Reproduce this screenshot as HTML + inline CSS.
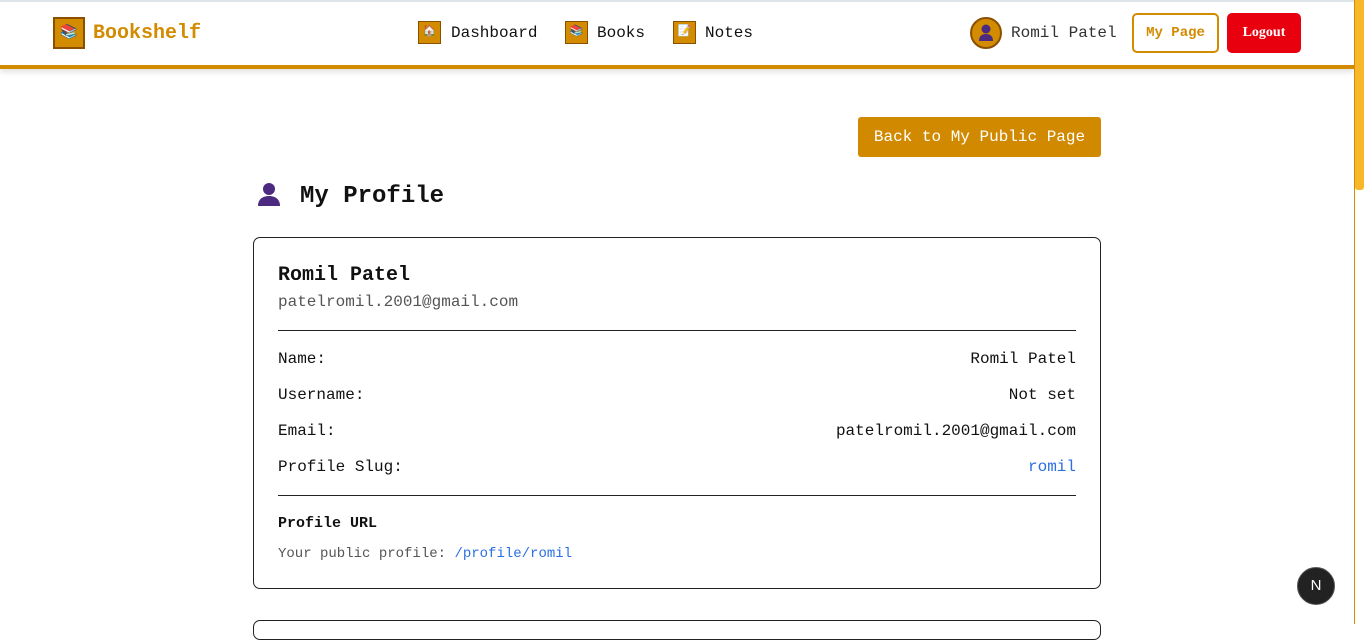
<!DOCTYPE html>
<html><head><meta charset="utf-8"><style>
*{box-sizing:border-box;margin:0;padding:0}
body{width:1365px;height:624px;overflow:hidden;background:#fff;font-family:"Liberation Mono","Courier New",monospace;color:#111;position:relative}
.hdr{position:absolute;left:0;top:0;width:1354px;height:69px;border-top:2px solid #dde5e8;border-bottom:4px solid #d38b00;background:#fff;box-shadow:0 3px 6px rgba(0,0,0,.12)}
.ib{position:absolute;width:23px;height:23px;background:#d38b00;border:1px solid #8a4f00;font-size:11px;line-height:21px;text-align:center}
.t{position:absolute;font-size:16px;white-space:nowrap;line-height:1}
.sb{position:absolute;right:0;top:0;width:11px;height:624px;background:#fff;border-left:1px solid #d38b00}
.thumb{position:absolute;right:1px;top:0;width:9px;height:190px;background:#f8b82a;border-radius:0 0 3px 3px}
.card{position:absolute;left:253px;top:237px;width:848px;height:352px;border:1px solid #222;border-radius:7px}
.row{position:absolute;left:278px;width:798px;font-size:16px;line-height:1;display:flex;justify-content:space-between}
</style></head><body>
<div class="hdr">
 <div class="ib" style="left:53px;top:15px;width:32px;height:32px;border-width:2px;line-height:28px;font-size:14px">📚</div>
 <div class="t" style="left:93px;top:22px;font-size:20px;font-weight:bold;color:#d38b00">Bookshelf</div>
 <div class="ib" style="left:418px;top:19px">🏠</div><div class="t" style="left:451px;top:23px">Dashboard</div>
 <div class="ib" style="left:565px;top:19px">📚</div><div class="t" style="left:597px;top:23px">Books</div>
 <div class="ib" style="left:673px;top:19px">📝</div><div class="t" style="left:705px;top:23px">Notes</div>
 <div style="position:absolute;left:970px;top:15px;width:32px;height:32px;border-radius:50%;background:#d38b00;border:2px solid #8a4f00"><svg width="28" height="28" viewBox="0 0 28 28"><circle cx="14" cy="10" r="4.5" fill="#4b2a80"/><path d="M7 22c0-5 3-7 7-7s7 2 7 7z" fill="#4b2a80"/></svg></div>
 <div class="t" style="left:1011px;top:23px;color:#333">Romil Patel</div>
 <div style="position:absolute;left:1132px;top:11px;width:87px;height:40px;border:2px solid #d38b00;border-radius:5px;color:#d38b00;font-weight:bold;font-size:14px;text-align:center;line-height:36px">My Page</div>
 <div style="position:absolute;left:1227px;top:11px;width:74px;height:40px;background:#e8000f;border-radius:5px;color:#fff;font-weight:bold;font-size:14px;text-align:center;line-height:40px;font-family:'Liberation Serif',serif">Logout</div>
</div>
<div style="position:absolute;left:858px;top:117px;width:243px;height:40px;background:#d18a00;border-radius:3px;color:#fff;font-size:16px;text-align:center;line-height:40px">Back to My Public Page</div>
<svg style="position:absolute;left:256px;top:181px" width="26" height="26" viewBox="0 0 26 26"><circle cx="13" cy="8" r="6" fill="#4b2a80"/><path d="M2 25c0-7 5-10 11-10s11 3 11 10z" fill="#4b2a80"/></svg>
<div class="t" style="left:300px;top:185px;font-size:24px;font-weight:bold">My Profile</div>
<div class="card"></div>
<div class="t" style="left:278px;top:266px;font-size:20px;font-weight:bold">Romil Patel</div>
<div class="t" style="left:278px;top:294px;color:#555">patelromil.2001@gmail.com</div>
<div style="position:absolute;left:278px;top:330px;width:798px;border-top:1px solid #222"></div>
<div class="row" style="top:351px"><span>Name:</span><span>Romil Patel</span></div>
<div class="row" style="top:387px"><span>Username:</span><span>Not set</span></div>
<div class="row" style="top:423px"><span>Email:</span><span>patelromil.2001@gmail.com</span></div>
<div class="row" style="top:459px"><span>Profile Slug:</span><span style="color:#2b6fe0">romil</span></div>
<div style="position:absolute;left:278px;top:495px;width:798px;border-top:1px solid #222"></div>
<div class="t" style="left:278px;top:516px;font-size:15px;font-weight:bold">Profile URL</div>
<div class="t" style="left:278px;top:547px;font-size:14px;color:#555">Your public profile: <span style="color:#2b6fe0">/profile/romil</span></div>
<div style="position:absolute;left:253px;top:620px;width:848px;height:20px;border:1px solid #222;border-radius:7px"></div>
<div style="position:absolute;left:1297px;top:567px;width:38px;height:38px;border-radius:50%;background:#222;border:1px solid #555;color:#fff;text-align:center;line-height:36px;font-family:'Liberation Sans',sans-serif;font-size:15px">N</div>
<div class="sb"><div class="thumb"></div></div>
</body></html>
